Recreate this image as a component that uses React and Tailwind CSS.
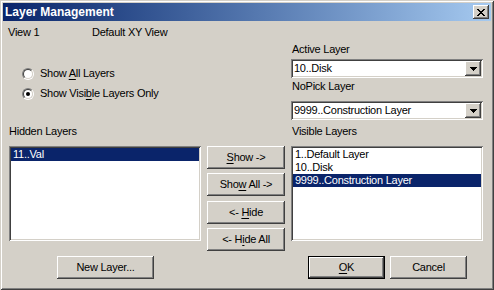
const raised =
  "bg-[#d4d0c8] shadow-[inset_-1px_-1px_#404040,inset_1px_1px_#ffffff,inset_-2px_-2px_#808080,inset_2px_2px_#d4d0c8]";
const sunken =
  "bg-white shadow-[inset_1px_1px_#808080,inset_-1px_-1px_#ffffff,inset_2px_2px_#404040,inset_-2px_-2px_#d4d0c8]";

function Btn({ children, className = "" }) {
  return (
    <div className={`flex items-center justify-center h-[23px] ${raised} ${className}`}>
      <span className="leading-[13px]">{children}</span>
    </div>
  );
}

function U({ children }) {
  return <span className="underline underline-offset-[2px]">{children}</span>;
}

function Radio({ checked, children }) {
  return (
    <div className="flex items-center h-[13px] pl-[13px]">
      <div className="w-[12px] h-[12px] rounded-full border border-t-[#808080] border-l-[#808080] border-b-white border-r-white">
        <div className="w-full h-full rounded-full border border-t-[#404040] border-l-[#404040] border-b-[#d4d0c8] border-r-[#d4d0c8] bg-white flex items-center justify-center">
          {checked ? <div className="w-[4px] h-[4px] rounded-full bg-black" /> : null}
        </div>
      </div>
      <span className="ml-[6px] leading-[13px]">{children}</span>
    </div>
  );
}

function Combo({ value }) {
  return (
    <div className={`h-[19px] flex items-center justify-between p-[2px] ${sunken}`}>
      <span className="pl-[1px] leading-[13px]">{value}</span>
      <div className={`w-[16px] h-full flex items-center justify-center ${raised}`}>
        <svg width="7" height="4" viewBox="0 0 7 4" shapeRendering="crispEdges">
          <path d="M0 0h7v1H0zM1 1h5v1H1zM2 2h3v1H2zM3 3h1v1H3z" fill="#000" />
        </svg>
      </div>
    </div>
  );
}

function ListBox({ items, selected }) {
  return (
    <div className={`h-[95px] p-[2px] ${sunken}`}>
      {items.map((item) => (
        <div
          key={item}
          className={`h-[13px] leading-[13px] pl-[2px] ${
            item === selected ? "bg-[#0a246a] text-white" : ""
          }`}
        >
          {item}
        </div>
      ))}
    </div>
  );
}

export default function App() {
  return (
    <div className="w-[494px] h-[290px] bg-[#d4d0c8] p-[3px] flex flex-col text-[11px] tracking-[-0.25px] text-black font-['Liberation_Sans',Arial,sans-serif] shadow-[inset_1px_1px_#d4d0c8,inset_-1px_-1px_#404040,inset_2px_2px_#ffffff,inset_-2px_-2px_#808080]">
      <div className="h-[18px] flex items-center justify-between pl-[2px] pr-[2px] bg-gradient-to-r from-[#0a246a] to-[#a6caf0]">
        <span className="text-white font-bold text-[12px] tracking-normal">Layer Management</span>
        <div className={`w-[16px] h-[14px] flex items-center justify-center ${raised}`}>
          <svg width="8" height="7" viewBox="0 0 8 7" shapeRendering="crispEdges">
            <path
              d="M0 0h2v1H0zM6 0h2v1H6zM1 1h2v1H1zM5 1h2v1H5zM2 2h4v1H2zM3 3h2v1H3zM2 4h4v1H2zM1 5h2v1H1zM5 5h2v1H5zM0 6h2v1H0zM6 6h2v1H6z"
              fill="#000"
            />
          </svg>
        </div>
      </div>

      <div className="flex-1 flex pl-[6px]">
        <div className="w-[192px] flex flex-col">
          <div className="mt-[5px] h-[13px] leading-[13px] flex">
            <span className="w-[84px] -ml-[1px]">View 1</span>
            <span>Default XY View</span>
          </div>
          <div className="mt-[28px]">
            <Radio>
              Show <U>A</U>ll Layers
            </Radio>
          </div>
          <div className="mt-[7px]">
            <Radio checked>
              Show Visi<U>b</U>le Layers Only
            </Radio>
          </div>
          <div className="mt-[25px] h-[13px] leading-[13px]">Hidden Layers</div>
          <div className="mt-[8px]">
            <ListBox items={["11..Val"]} selected="11..Val" />
          </div>
          <Btn className="mt-[15px] ml-[48px] w-[97px]">New Layer...</Btn>
        </div>

        <div className="w-[78px] ml-[6px] flex flex-col pt-[125px]">
          <Btn>
            <U>S</U>how -&gt;
          </Btn>
          <Btn className="mt-[4px]">
            Sho<U>w</U> All -&gt;
          </Btn>
          <Btn className="mt-[5px]">
            &lt;- <U>H</U>ide
          </Btn>
          <Btn className="mt-[4px]">
            &lt;- H<U>i</U>de All
          </Btn>
        </div>

        <div className="w-[192px] ml-[6px] flex flex-col">
          <div className="mt-[22px] h-[13px] leading-[13px] pl-[1px]">Active Layer</div>
          <div className="mt-[3px]">
            <Combo value="10..Disk" />
          </div>
          <div className="mt-[2px] h-[13px] leading-[13px] pl-[1px]">NoPick Layer</div>
          <div className="mt-[8px]">
            <Combo value="9999..Construction Layer" />
          </div>
          <div className="mt-[5px] h-[13px] leading-[13px] pl-[1px]">Visible Layers</div>
          <div className="mt-[8px]">
            <ListBox
              items={["1..Default Layer", "10..Disk", "9999..Construction Layer"]}
              selected="9999..Construction Layer"
            />
          </div>
          <div className="mt-[15px] flex pl-[17px] gap-[5px]">
            <div className="w-[77px] h-[23px] border border-black">
              <Btn className="h-full">
                <U>O</U>K
              </Btn>
            </div>
            <Btn className="w-[77px]">Cancel</Btn>
          </div>
        </div>
      </div>
    </div>
  );
}
